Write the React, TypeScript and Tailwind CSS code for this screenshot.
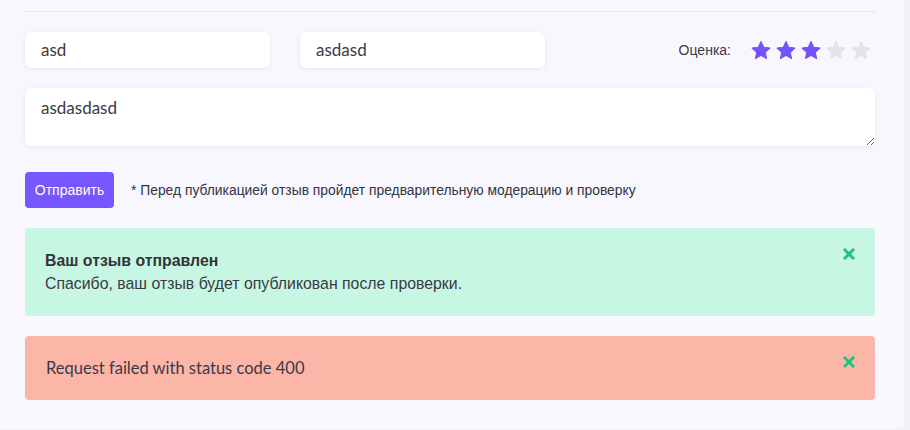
import React from "react";

const Star = ({ on }: { on: boolean }) => (
  <svg width="22" height="21" viewBox="0 0 24 24" className="block">
    <path
      d="M12 1.8l3.05 6.55 7.15.85-5.3 4.9 1.42 7.08L12 17.6l-6.32 3.58 1.42-7.08-5.3-4.9 7.15-.85z"
      fill={on ? "#7452fd" : "#e4e4e7"}
      stroke={on ? "#7452fd" : "#e4e4e7"}
      strokeWidth="1.2"
      strokeLinejoin="round"
    />
  </svg>
);

const Close = () => (
  <svg width="12" height="12" viewBox="0 0 12 12" className="block">
    <path d="M2 2L10 10M10 2L2 10" stroke="#1fc382" strokeWidth="3" strokeLinecap="square" />
  </svg>
);

export default function App() {
  const sans = { fontFamily: "'Liberation Sans', Arial, sans-serif" };
  const latin = { fontFamily: "Lato, 'Liberation Sans', sans-serif" };
  return (
    <div className="w-[910px] h-[430px] bg-[#f1f1f5] overflow-hidden">
      <div className="w-[904px] h-[429px] bg-[#f8f7fe] rounded-br-[5px] pl-[25px] pr-[29px] pt-[11px] text-[#36363f]">
        <div className="border-t border-[#e6e5ee]" />
        <div className="mt-[20px] flex items-center">
          <div
            className="w-[245px] h-[36px] bg-white rounded-[6px] shadow-[0_1px_4px_rgba(0,0,0,0.07)] pl-[16px] flex items-center text-[17px] text-[#3a3a44]"
            style={latin}
          >
            asd
          </div>
          <div
            className="ml-[30px] w-[245px] h-[36px] bg-white rounded-[6px] shadow-[0_1px_4px_rgba(0,0,0,0.07)] pl-[16px] flex items-center text-[17px] text-[#3a3a44]"
            style={latin}
          >
            asdasd
          </div>
          <div className="ml-auto flex items-center mr-[3px]">
            <span className="text-[14px] text-[#3a3a48] mr-[19px]" style={sans}>
              Оценка:
            </span>
            <div className="flex gap-[3px]">
              <Star on />
              <Star on />
              <Star on />
              <Star on={false} />
              <Star on={false} />
            </div>
          </div>
        </div>
        <textarea
          defaultValue="asdasdasd"
          className="mt-[20px] block w-full h-[58px] bg-white rounded-[6px] shadow-[0_1px_4px_rgba(0,0,0,0.07)] pl-[16px] pt-[7px] text-[17px] text-[#3a3a44] outline-none"
          style={latin}
        />
        <div className="mt-[26px] flex items-center">
          <button
            className="h-[36px] w-[89px] bg-[#7856ff] rounded-[4px] text-white text-[14px] flex items-center justify-center"
            style={sans}
          >
            Отправить
          </button>
          <span className="ml-[17px] text-[13.85px] text-[#33333d]" style={sans}>
            * Перед публикацией отзыв пройдет предварительную модерацию и проверку
          </span>
        </div>
        <div className="mt-[20px] relative bg-[#c7f7e3] rounded-[4px] px-[20px] py-[21px] text-[15.85px] leading-[23px]" style={sans}>
          <div className="font-bold text-[#33333b]">Ваш отзыв отправлен</div>
          <div className="text-[#3a3a44]">Спасибо, ваш отзыв будет опубликован после проверки.</div>
          <div className="absolute right-[20px] top-[20px]">
            <Close />
          </div>
        </div>
        <div className="mt-[20px] relative bg-[#fcb6a8] rounded-[4px] px-[21px] py-[20px] text-[16.5px] leading-[24px] text-[#3a3a48]" style={latin}>
          Request failed with status code 400
          <div className="absolute right-[20px] top-[20px]">
            <Close />
          </div>
        </div>
      </div>
    </div>
  );
}
